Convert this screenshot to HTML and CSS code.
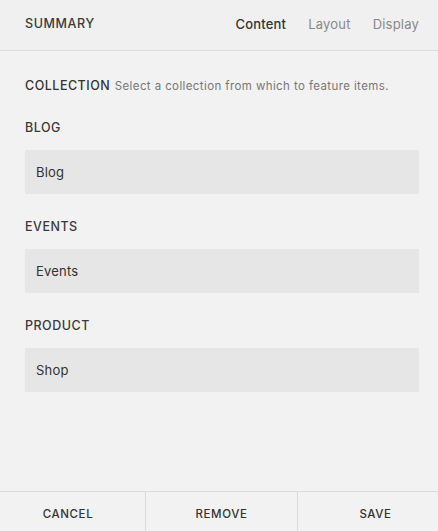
FILE: index.html
```html
<!DOCTYPE html>
<html lang="en">
<head>
    <meta charset="UTF-8">
    <meta name="viewport" content="width=device-width, initial-scale=1.0">
    <title>Summary</title>
    <link rel="stylesheet" href="styles.css">
</head>
<body>
    <div class="panel">
        <header class="panel-header">
            <h1 class="panel-title">SUMMARY</h1>
            <nav class="tabs">
                <a href="#" class="tab active">Content</a>
                <a href="#" class="tab">Layout</a>
                <a href="#" class="tab">Display</a>
            </nav>
        </header>

        <main class="panel-body">
            <p class="collection">
                <span class="collection-label">COLLECTION</span>
                <span class="collection-hint">Select a collection from which to feature items.</span>
            </p>

            <div class="field">
                <div class="field-label">BLOG</div>
                <div class="field-select">Blog</div>
            </div>

            <div class="field">
                <div class="field-label">EVENTS</div>
                <div class="field-select">Events</div>
            </div>

            <div class="field">
                <div class="field-label">PRODUCT</div>
                <div class="field-select">Shop</div>
            </div>
        </main>

        <footer class="panel-footer">
            <button class="footer-button cancel">CANCEL</button>
            <button class="footer-button remove">REMOVE</button>
            <button class="footer-button save">SAVE</button>
        </footer>
    </div>
</body>
</html>
```

FILE: styles.css
```css
* {
    margin: 0;
    padding: 0;
    box-sizing: border-box;
    font-family: 'Inter', 'Open Sans', sans-serif;
    line-height: 16px;
}

body {
    background-color: #f2f2f2;
    color: #333;
}

.panel {
    height: 531px;
    display: flex;
    flex-direction: column;
}

.panel-header {
    height: 51px;
    display: flex;
    align-items: center;
    justify-content: space-between;
    padding: 0 19px 3px 25px;
    background-color: #f0f0f0;
    border-bottom: 1px solid #dcdcdc;
}

.panel-title {
    font-size: 12.5px;
    font-weight: 500;
    letter-spacing: 0.6px;
    color: #3a3a3a;
}

.tabs {
    display: flex;
    gap: 22px;
}

.tab {
    font-size: 13px;
    letter-spacing: 0.2px;
    color: #888;
    text-decoration: none;
}

.tab.active {
    color: #333;
    font-weight: 500;
}

.panel-body {
    flex: 1;
    padding: 25px 19px 0 25px;
}

.collection {
    margin-bottom: 26px;
}

.collection-label {
    font-size: 12.5px;
    font-weight: 500;
    letter-spacing: 0.5px;
    color: #333;
}

.collection-hint {
    font-size: 11.5px;
    letter-spacing: 0.4px;
    color: #777;
}

.field {
    margin-bottom: 25px;
}

.field-label {
    font-size: 12.5px;
    font-weight: 500;
    letter-spacing: 0.5px;
    color: #3a3a3a;
    margin-bottom: 14px;
}

.field-select {
    height: 44px;
    display: flex;
    align-items: center;
    padding-left: 11px;
    background-color: #e6e6e6;
    font-size: 13px;
    letter-spacing: 0.2px;
    color: #333;
}

.panel-footer {
    height: 40px;
    display: grid;
    grid-template-columns: 145px 153px 1fr;
    border-top: 1px solid #dcdcdc;
}

.footer-button {
    background: none;
    border: none;
    padding-top: 4px;
    font-size: 11.5px;
    font-weight: 500;
    letter-spacing: 0.6px;
    color: #333;
    cursor: pointer;
}

.footer-button.cancel {
    padding-right: 9px;
}

.footer-button.remove {
    border-left: 1px solid #dcdcdc;
    border-right: 1px solid #dcdcdc;
}

.footer-button.save {
    padding-left: 15px;
}
```
